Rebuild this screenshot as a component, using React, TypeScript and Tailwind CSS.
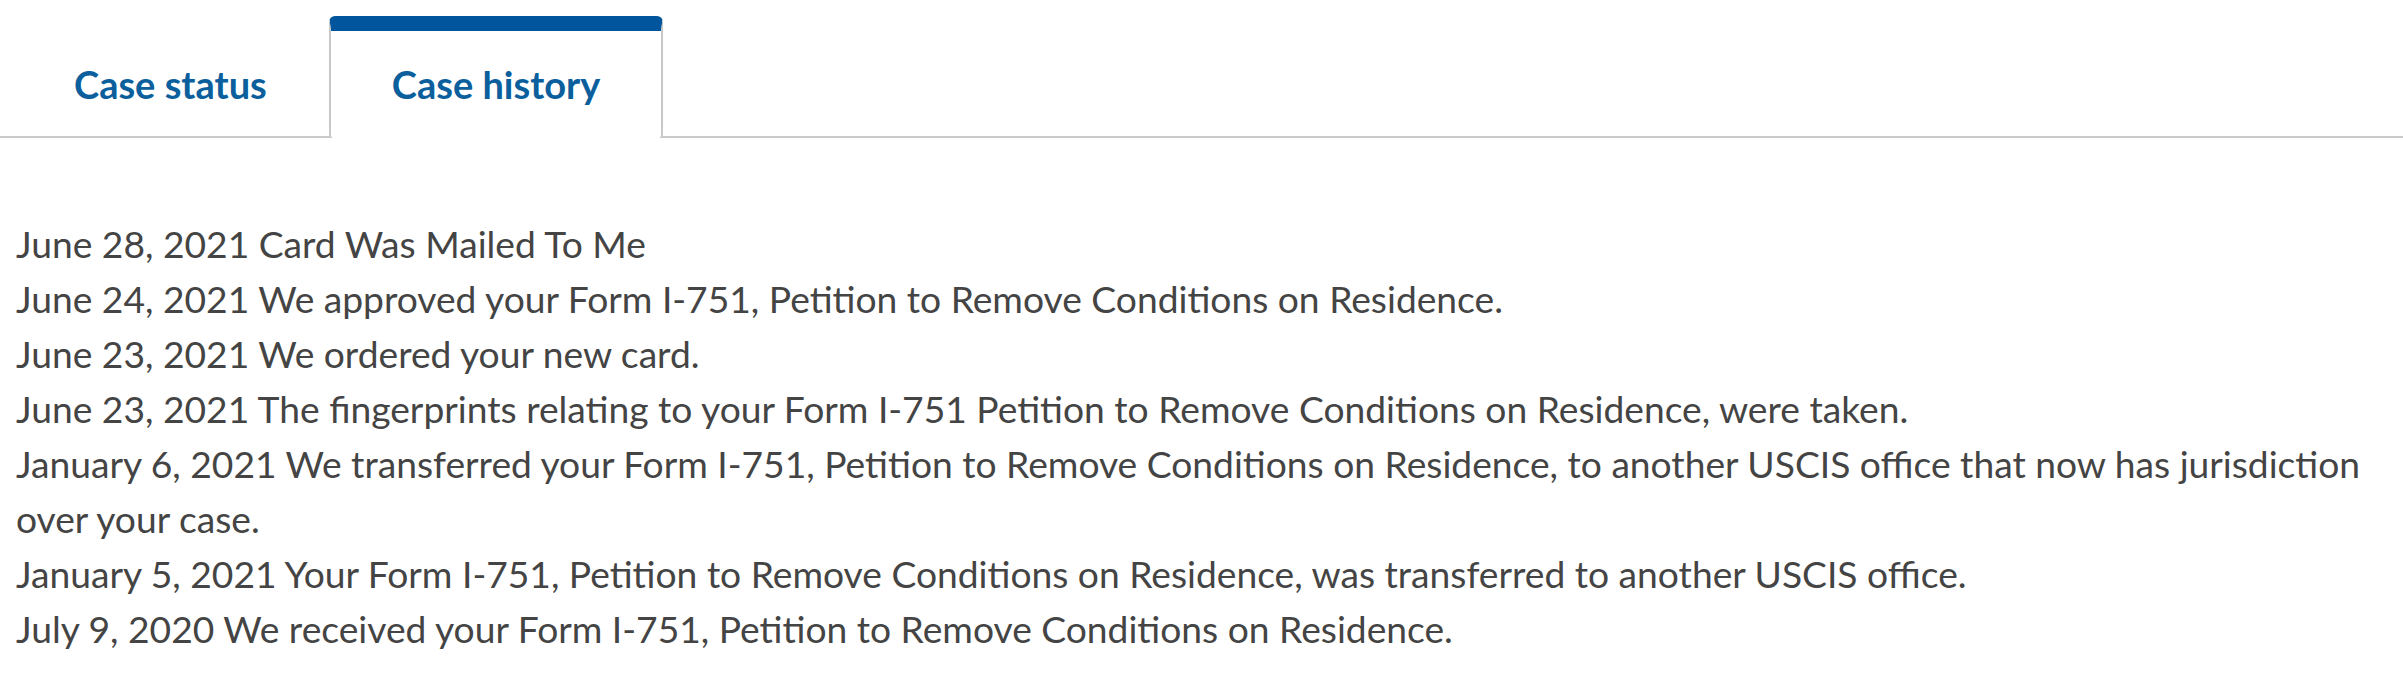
const history = [
  "June 28, 2021 Card Was Mailed To Me",
  "June 24, 2021 We approved your Form I-751, Petition to Remove Conditions on Residence.",
  "June 23, 2021 We ordered your new card.",
  "June 23, 2021 The fingerprints relating to your Form I-751 Petition to Remove Conditions on Residence, were taken.",
  "January 6, 2021 We transferred your Form I-751, Petition to Remove Conditions on Residence, to another USCIS office that now has jurisdiction over your case.",
  "January 5, 2021 Your Form I-751, Petition to Remove Conditions on Residence, was transferred to another USCIS office.",
  "July 9, 2020 We received your Form I-751, Petition to Remove Conditions on Residence.",
];

export default function App() {
  return (
    <div className="min-h-screen bg-white font-['Lato','Liberation_Sans',sans-serif]">
      {/* Tabs */}
      <div className="flex items-end h-[138px] pl-3 border-b-2 border-[#cacaca]">
        <button className="h-[122px] -mb-[2px] px-[62px] border-t-[15px] border-transparent flex items-center justify-center text-[38px] font-bold text-[#0c5f9d]">
          Case status
        </button>
        <button className="h-[122px] -mb-[2px] px-[61px] bg-white border-x-2 border-[#c8c8c8] border-t-[15px] border-t-[#00559c] rounded-t-[6px] rounded-b-[4px] flex items-center justify-center text-[38px] font-bold text-[#0c5f9d]">
          Case history
        </button>
      </div>

      {/* History list */}
      <div className="px-4 pt-[78px] text-[37.2px] leading-[55px] text-[#444444]">
        {history.map((item, i) => (
          <p key={i}>{item}</p>
        ))}
      </div>
    </div>
  );
}
